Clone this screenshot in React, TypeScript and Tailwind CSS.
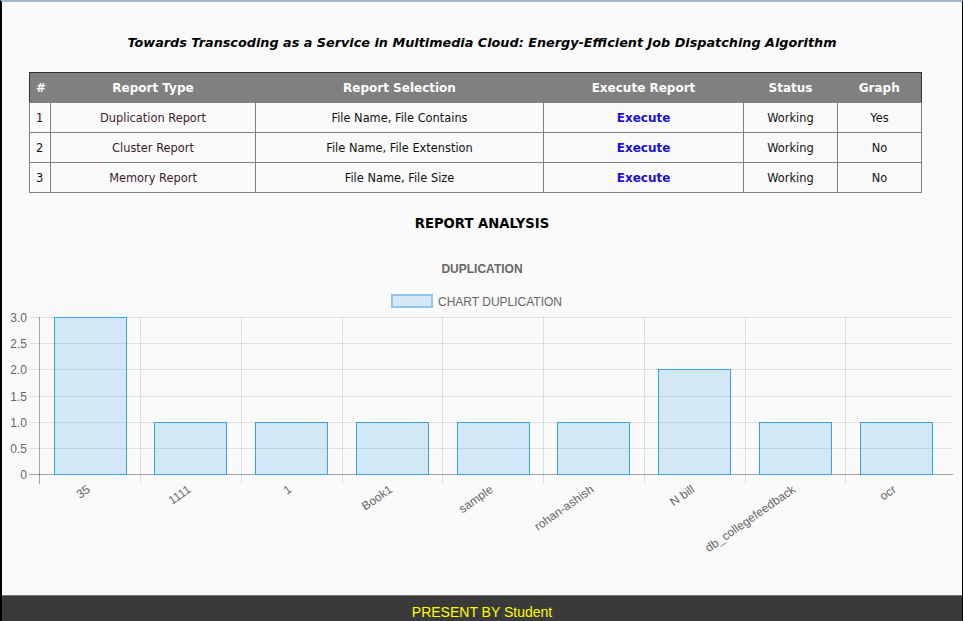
import React from 'react';

const rows = [
  { id: 1, type: 'Duplication Report', selection: 'File Name, File Contains', status: 'Working', graph: 'Yes' },
  { id: 2, type: 'Cluster Report', selection: 'File Name, File Extenstion', status: 'Working', graph: 'No' },
  { id: 3, type: 'Memory Report', selection: 'File Name, File Size', status: 'Working', graph: 'No' },
];

const chartData = [
  { label: '35', value: 3 },
  { label: '1111', value: 1 },
  { label: '1', value: 1 },
  { label: 'Book1', value: 1 },
  { label: 'sample', value: 1 },
  { label: 'rohan-ashish', value: 1 },
  { label: 'N bill', value: 2 },
  { label: 'db_collegefeedback', value: 1 },
  { label: 'ocr', value: 1 },
];

// chart geometry, in page coordinates
const LEFT = 39.3;
const STEP = 100.75;
const ZERO = 474;
const UNIT = 52.33;
const BAR_W = 72;
const RIGHT = 953;

const DuplicationChart: React.FC = () => {
  const ticks = [0, 0.5, 1, 1.5, 2, 2.5, 3];
  const font = { fontFamily: '"Liberation Sans", Arial, sans-serif' };

  return (
    <svg width={960} height={363} viewBox="2 232 960 363" className="block shrink-0" style={font}>
      <text x={482} y={268.5} textAnchor="middle" dominantBaseline="central" fontSize={12} fontWeight="bold" fill="#666">
        DUPLICATION
      </text>
      <rect x={392} y={295} width={40} height={12} fill="#d3e7f7" stroke="#8fc6f0" strokeWidth={2} />
      <text x={438} y={301.5} dominantBaseline="central" fontSize={12} fill="#666">
        CHART DUPLICATION
      </text>

      {ticks.map((t) => {
        const y = Math.round(ZERO - t * UNIT) + 0.5;
        return (
          <g key={t}>
            <line x1={29} x2={RIGHT} y1={y} y2={y} stroke={t === 0 ? 'rgba(0,0,0,0.35)' : 'rgba(0,0,0,0.1)'} />
            <text x={27} y={y} textAnchor="end" dominantBaseline="central" fontSize={12} fill="#666">
              {t === 0 ? '0' : t.toFixed(1)}
            </text>
          </g>
        );
      })}

      {chartData.map((_, i) => {
        const x = Math.round(LEFT + STEP * i) + 0.5;
        return (
          <line
            key={i}
            x1={x}
            x2={x}
            y1={317}
            y2={484}
            stroke={i === 0 ? 'rgba(0,0,0,0.35)' : 'rgba(0,0,0,0.1)'}
          />
        );
      })}

      {chartData.map((d, i) => {
        const cx = LEFT + STEP * (i + 0.5);
        const top = ZERO - d.value * UNIT;
        return (
          <g key={d.label}>
            <rect
              x={Math.round(cx - BAR_W / 2) + 0.5}
              y={Math.round(top) + 0.5}
              width={BAR_W}
              height={Math.round(ZERO - top)}
              fill="rgba(54,162,235,0.2)"
              stroke="rgb(54,162,235)"
              strokeWidth={1}
            />
            <text
              transform={`translate(${cx - 1},${488}) rotate(-35)`}
              textAnchor="end"
              dominantBaseline="central"
              fontSize={12}
              fill="#666"
            >
              {d.label}
            </text>
          </g>
        );
      })}
    </svg>
  );
};

const App: React.FC = () => {
  const verdana = { fontFamily: '"DejaVu Sans", Verdana, sans-serif' };

  return (
    <div className="w-[963px] h-[621px] overflow-hidden bg-[#fafafa] border-l-2 border-r border-l-black border-r-black border-t-2 border-t-[#a3b6cb] flex flex-col">
      <h3
        className="pt-[32px] text-center text-[12.8px] leading-[18px] font-bold italic text-black"
        style={verdana}
      >
        Towards Transcoding as a Service in Multimedia Cloud: Energy-Efficient Job Dispatching Algorithm
      </h3>

      <table
        className="mt-[20px] ml-[27px] w-[893px] border-collapse border border-[#333] table-fixed shrink-0"
        style={verdana}
      >
        <colgroup>
          <col className="w-[21px]" />
          <col className="w-[205px]" />
          <col className="w-[288px]" />
          <col className="w-[200px]" />
          <col className="w-[94px]" />
          <col className="w-[84px]" />
        </colgroup>
        <thead>
          <tr className="bg-[#808080] text-white text-[12px] font-bold h-[30px]">
            <th className="text-left pl-[6px]">#</th>
            <th>Report Type</th>
            <th>Report Selection</th>
            <th>Execute Report</th>
            <th>Status</th>
            <th>Graph</th>
          </tr>
        </thead>
        <tbody className="text-[11.4px] text-[#111]">
          {rows.map((r) => (
            <tr key={r.id} className="h-[30px]">
              <td className="border border-[#808080] pl-[6px] pt-[3px]">{r.id}</td>
              <td className="border border-[#808080] pt-[3px] text-center text-[#3d1a2f]">{r.type}</td>
              <td className="border border-[#808080] pt-[3px] text-center">{r.selection}</td>
              <td className="border border-[#808080] pt-[2px] text-center">
                <a className="text-[12px] font-bold text-[#1a0fd8] cursor-pointer">Execute</a>
              </td>
              <td className="border border-[#808080] pt-[3px] text-center">{r.status}</td>
              <td className="border border-[#808080] pt-[3px] text-center">{r.graph}</td>
            </tr>
          ))}
        </tbody>
      </table>

      <h4 className="mt-[23px] text-center text-[13.2px] leading-[16px] font-bold text-black" style={verdana}>
        REPORT ANALYSIS
      </h4>

      <DuplicationChart />

      <footer className="shrink-0 h-[40px] border-t border-t-[#777] bg-[#3a3a3a] pt-[10px] text-center">
        <span
          className="block text-[14px] leading-[12px] text-[#ffff00]"
          style={{ fontFamily: '"Liberation Sans", Arial, sans-serif' }}
        >
          PRESENT BY Student
        </span>
      </footer>
    </div>
  );
};

export default App;
